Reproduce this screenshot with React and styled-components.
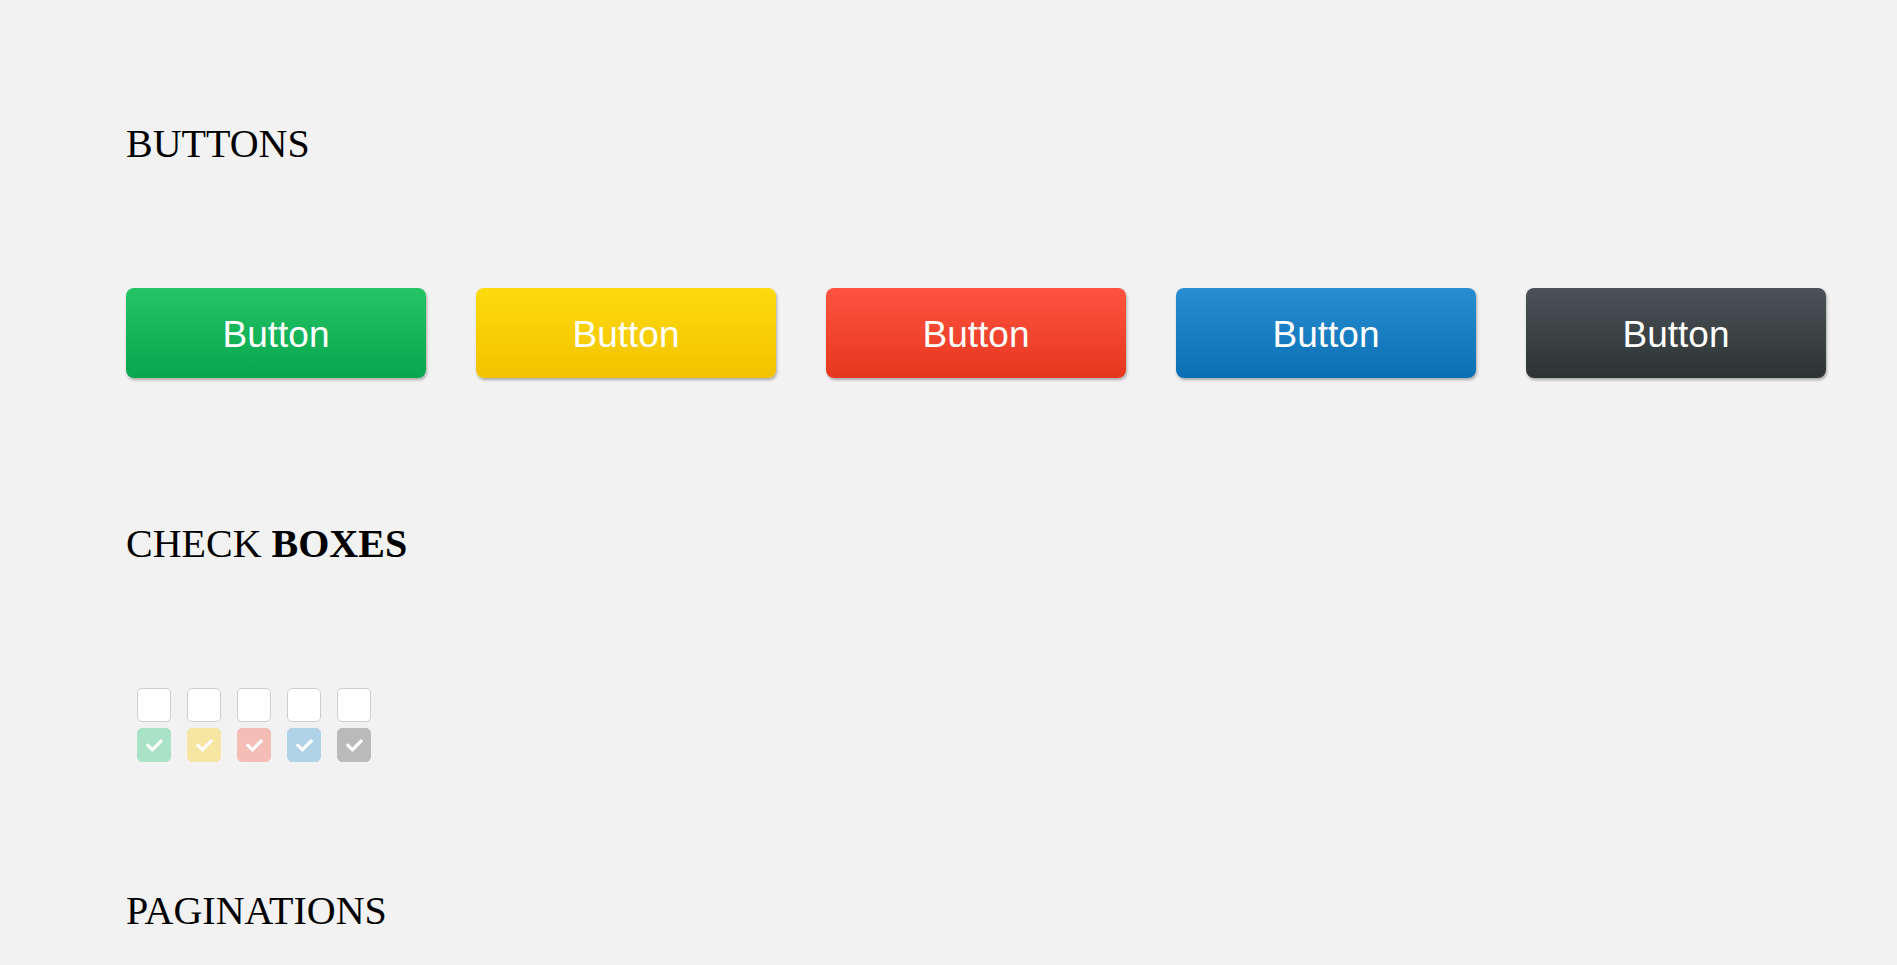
import styled, { createGlobalStyle } from "styled-components";
import { FaCheck } from "react-icons/fa";

const GlobalStyle = createGlobalStyle`
  body {
    margin: 0;
    background-color: #f2f2f2;
    font-family: "Liberation Serif", "Times New Roman", serif;
  }
`;

const Page = styled.main`
  padding: 121px 40px 40px 126px;
`;

const Heading = styled.h2`
  margin: ${(props) => props.$top || 0}px 0 0;
  font-size: 40px;
  line-height: 46px;
  font-weight: 400;
  color: #000;
  b {
    font-weight: 700;
  }
`;

const ButtonRow = styled.div`
  display: flex;
  gap: 50px;
  margin-top: 121px;
`;

const Button = styled.button`
  flex: 0 0 300px;
  height: 90px;
  border: none;
  border-radius: 8px;
  padding: 4px 0 0;
  font-family: "Liberation Sans", Arial, sans-serif;
  font-size: 37px;
  color: #fff;
  cursor: pointer;
  background: linear-gradient(${(props) => props.$from}, ${(props) => props.$to});
  box-shadow: 1px 2px 3px rgba(0, 0, 0, 0.3);
`;

const CheckGrid = styled.div`
  display: grid;
  grid-template-columns: repeat(5, 34px);
  grid-auto-rows: 34px;
  column-gap: 16px;
  row-gap: 6px;
  margin: 121px 0 0 11px;
`;

const Box = styled.span`
  box-sizing: border-box;
  display: flex;
  align-items: center;
  justify-content: center;
  border-radius: 5px;
  background: ${(props) => props.$color || "#fff"};
  border: 1px solid ${(props) => (props.$color ? props.$color : "#cfcfcf")};
  color: #fcfcfc;
  font-size: 17px;
`;

const buttons = [
  { from: "#25c466", to: "#08a64d" },
  { from: "#fedb0c", to: "#f2c200" },
  { from: "#fe5440", to: "#e6361e" },
  { from: "#288ed1", to: "#0a70b3" },
  { from: "#4c5356", to: "#2c3335" },
];

const checks = ["#a9e2c4", "#f7e6a2", "#f4beb6", "#b1d3e8", "#bababa"];

const App = () => {
  return (
    <Page>
      <GlobalStyle />
      <Heading>BUTTONS</Heading>
      <ButtonRow>
        {buttons.map((b, i) => (
          <Button key={i} $from={b.from} $to={b.to}>
            Button
          </Button>
        ))}
      </ButtonRow>

      <Heading $top={143}>
        CHECK <b>BOXES</b>
      </Heading>
      <CheckGrid>
        {checks.map((c, i) => (
          <Box key={"u" + i} />
        ))}
        {checks.map((c, i) => (
          <Box key={"c" + i} $color={c}>
            <FaCheck />
          </Box>
        ))}
      </CheckGrid>

      <Heading $top={126}>PAGINATIONS</Heading>
    </Page>
  );
};

export default App;
